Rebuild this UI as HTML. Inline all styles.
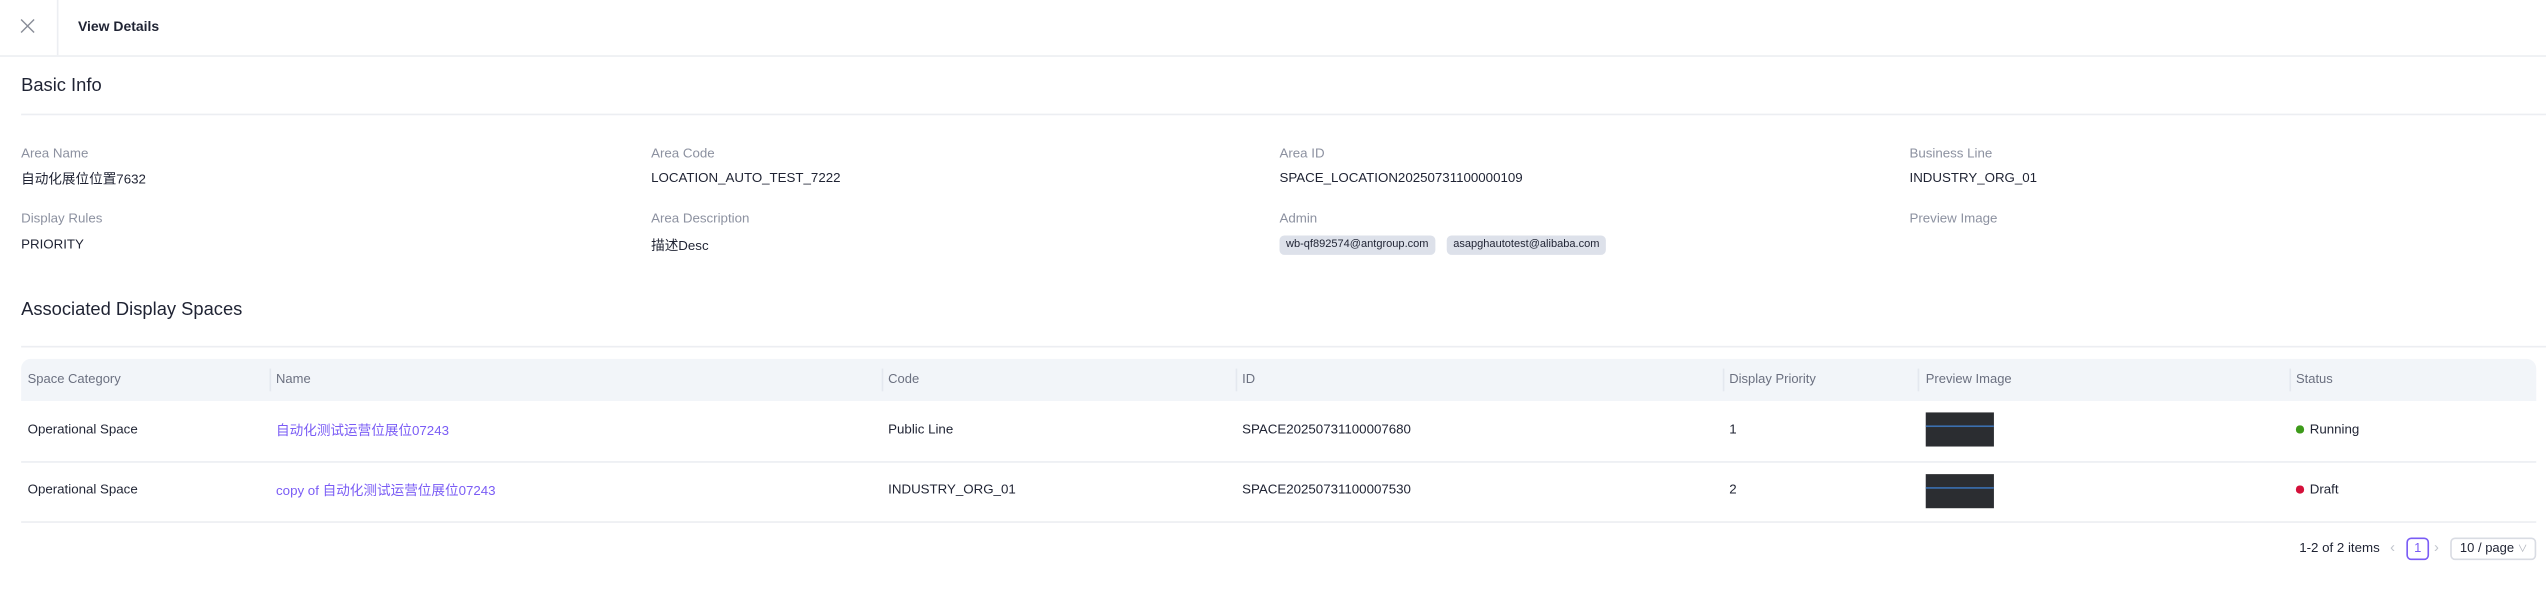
<!DOCTYPE html>
<html><head><meta charset="utf-8">
<style>
html,body{margin:0;padding:0;background:#fff;width:2546px;height:591px;overflow:hidden}
#w{position:absolute;left:0;top:0;width:1568px;height:364px;transform:scale(1.62372);transform-origin:0 0;font-family:"Liberation Sans","Noto Sans CJK SC",sans-serif;color:#1f2333}
.a{position:absolute;white-space:nowrap;line-height:10px}
.lab{font-size:8.2px;color:#8c91a0}
.val{font-size:8.2px;color:#1f2333}
.h{font-size:11.3px;color:#1f2333;line-height:14px}
.th{font-size:8px;color:#6b7080}
.td{font-size:8.2px}
.c{font-size:8.4px}
.lnk{color:#7a5cf5}
.line{position:absolute;height:1px;background:#eceef2}
.tag{position:absolute;height:12px;line-height:12px;background:#dde1ea;border-radius:3px;font-size:6.8px;padding:0 4px;color:#1f2333}
.thumb{position:absolute;width:42px;height:21px;background:#2b2d31;overflow:hidden}
.thumb i{position:absolute;left:0;width:42px;height:1px;background:#3b6fb0}
.dot{display:inline-block;width:4.5px;height:4.5px;border-radius:50%;margin-right:4px;vertical-align:0.5px}
.sep{position:absolute;width:1px;height:14px;background:#e4e8ef;top:227px}
</style></head><body><div id="w">
<svg class="a" style="left:12px;top:11px" width="10" height="10" viewBox="0 0 10 10"><path d="M1 1L9 9M9 1L1 9" stroke="#8a8e99" stroke-width="0.9"/></svg>
<div class="a" style="left:35px;top:0;width:1px;height:34px;background:#eceef2"></div>
<div class="a" style="left:48px;top:11px;font-size:8.6px;font-weight:bold">View Details</div>
<div class="line" style="left:0;top:34px;width:1568px"></div>

<div class="a h" style="left:13px;top:46px">Basic Info</div>
<div class="line" style="left:13px;top:70px;width:1555px"></div>

<div class="a lab" style="left:13px;top:90px">Area Name</div>
<div class="a val" style="left:13px;top:105px"><span class="c">自动化展位位置</span>7632</div>
<div class="a lab" style="left:401px;top:90px">Area Code</div>
<div class="a val" style="left:401px;top:105px">LOCATION_AUTO_TEST_7222</div>
<div class="a lab" style="left:788px;top:90px">Area ID</div>
<div class="a val" style="left:788px;top:105px">SPACE_LOCATION20250731100000109</div>
<div class="a lab" style="left:1176px;top:90px">Business Line</div>
<div class="a val" style="left:1176px;top:105px">INDUSTRY_ORG_01</div>

<div class="a lab" style="left:13px;top:130px">Display Rules</div>
<div class="a val" style="left:13px;top:146px">PRIORITY</div>
<div class="a lab" style="left:401px;top:130px">Area Description</div>
<div class="a val" style="left:401px;top:146px"><span class="c">描述</span>Desc</div>
<div class="a lab" style="left:788px;top:130px">Admin</div>
<div class="tag" style="left:788px;top:145px">wb-qf892574@antgroup.com</div>
<div class="tag" style="left:891px;top:145px">asapghautotest@alibaba.com</div>
<div class="a lab" style="left:1176px;top:130px">Preview Image</div>

<div class="a h" style="left:13px;top:184px">Associated Display Spaces</div>
<div class="line" style="left:13px;top:213px;width:1555px"></div>

<div class="a" style="left:13px;top:221px;width:1549px;height:26px;background:#f2f5f9;border-radius:6px 6px 0 0"></div>
<div class="sep" style="left:166px"></div><div class="sep" style="left:543px"></div><div class="sep" style="left:761px"></div><div class="sep" style="left:1061px"></div><div class="sep" style="left:1181px"></div><div class="sep" style="left:1410px"></div>
<div class="a th" style="left:17px;top:229px">Space Category</div>
<div class="a th" style="left:170px;top:229px">Name</div>
<div class="a th" style="left:547px;top:229px">Code</div>
<div class="a th" style="left:765px;top:229px">ID</div>
<div class="a th" style="left:1065px;top:229px">Display Priority</div>
<div class="a th" style="left:1186px;top:229px">Preview Image</div>
<div class="a th" style="left:1414px;top:229px">Status</div>

<div class="a td" style="left:17px;top:260px">Operational Space</div>
<div class="a td lnk" style="left:170px;top:260px"><span class="c">自动化测试运营位展位</span>07243</div>
<div class="a td" style="left:547px;top:260px">Public Line</div>
<div class="a td" style="left:765px;top:260px">SPACE20250731100007680</div>
<div class="a td" style="left:1065px;top:260px">1</div>
<div class="thumb" style="left:1186px;top:254px"><i style="top:8px"></i></div>
<div class="a td" style="left:1414px;top:260px"><span class="dot" style="background:#3d9a1a"></span>Running</div>
<div class="line" style="left:13px;top:284px;width:1549px"></div>

<div class="a td" style="left:17px;top:297px">Operational Space</div>
<div class="a td lnk" style="left:170px;top:297px">copy of <span class="c">自动化测试运营位展位</span>07243</div>
<div class="a td" style="left:547px;top:297px">INDUSTRY_ORG_01</div>
<div class="a td" style="left:765px;top:297px">SPACE20250731100007530</div>
<div class="a td" style="left:1065px;top:297px">2</div>
<div class="thumb" style="left:1186px;top:292px"><i style="top:8px"></i></div>
<div class="a td" style="left:1414px;top:297px"><span class="dot" style="background:#d4103a"></span>Draft</div>
<div class="line" style="left:13px;top:321px;width:1549px"></div>

<div class="a td" style="left:1416px;top:333px">1-2 of 2 items</div>
<div class="a" style="left:1472px;top:332px;font-size:9px;color:#c0c4cc">‹</div>
<div class="a" style="left:1482px;top:331px;width:12px;height:12px;border:1px solid #7a5cf5;border-radius:3px;font-size:8px;color:#7a5cf5;text-align:center;line-height:12px">1</div>
<div class="a" style="left:1499px;top:332px;font-size:9px;color:#c0c4cc">›</div>
<div class="a" style="left:1509px;top:331px;width:53px;height:14px;border:1px solid #d9dce3;border-radius:3px;font-size:8px;line-height:12px;padding-left:5px;box-sizing:border-box">10 / page <span style="color:#b0b4bc;font-size:6px">∨</span></div>
</div></body></html>
